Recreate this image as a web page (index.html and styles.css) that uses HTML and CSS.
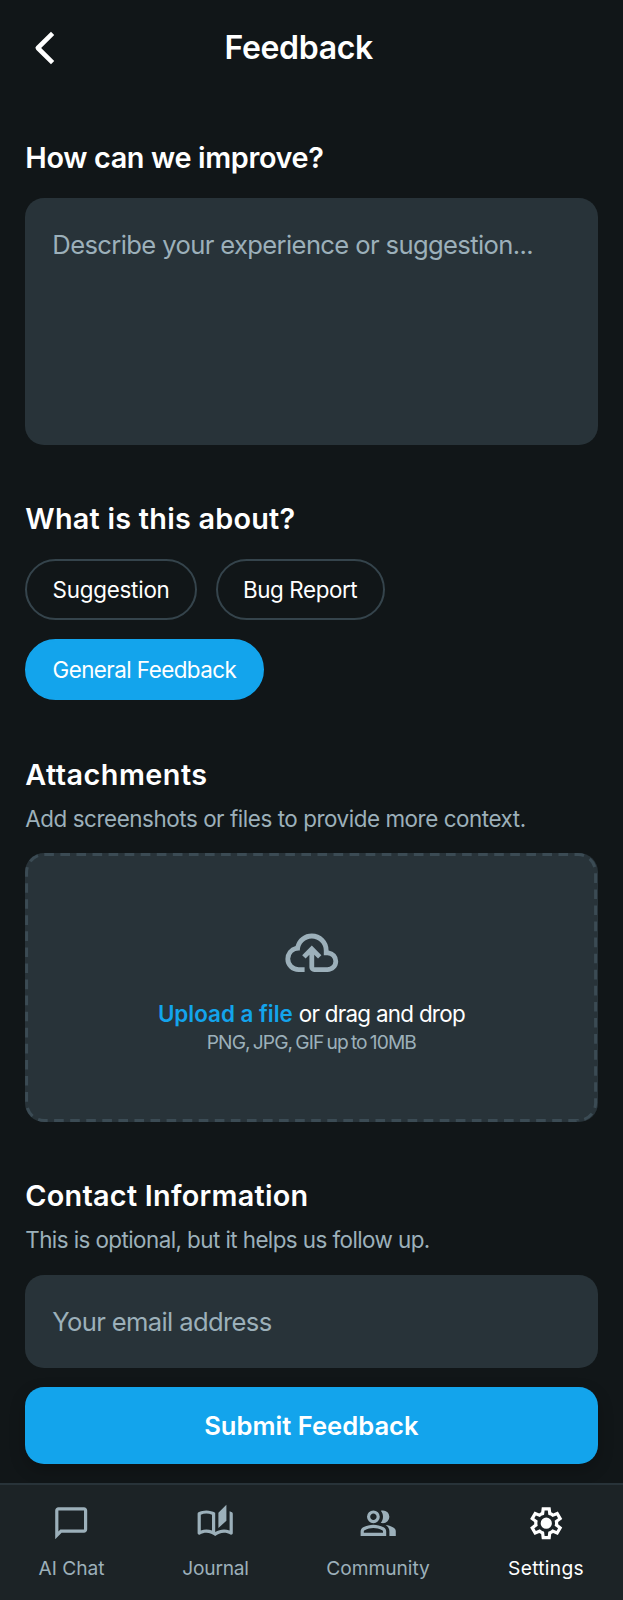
FILE: index.html
```html
<!DOCTYPE html>
<html lang="en">
<head>
<meta charset="utf-8">
<title>Feedback</title>
<link rel="stylesheet" href="styles.css">
</head>
<body>
<div class="screen">
  <header class="header">
    <svg class="back" viewBox="0 0 24 36" fill="none" stroke="currentColor" stroke-width="4.6" stroke-linejoin="round"><path d="M20.6 3.4 5.8 18 20.6 32.6"/></svg>
    <h1 class="title">Feedback</h1>
  </header>
  <main class="main">
    <section class="section">
      <h2 class="heading h-improve">How can we improve?</h2>
      <div class="field textarea"><span class="ph ph-describe">Describe your experience or suggestion...</span></div>
    </section>
    <section class="section">
      <h2 class="heading h-about">What is this about?</h2>
      <div class="chips">
        <button class="chip chip-suggestion">Suggestion</button>
        <button class="chip chip-bug">Bug Report</button>
        <button class="chip chip-general active">General Feedback</button>
      </div>
    </section>
    <section class="section">
      <h2 class="heading h-attach">Attachments</h2>
      <p class="sub sub-attach">Add screenshots or files to provide more context.</p>
      <div class="drop">
        <svg class="dashes" viewBox="0 0 572 269" fill="none"><rect x="1.5" y="1.5" width="569" height="266" rx="17.7" pathLength="1632"/></svg>
        <svg class="cloud" viewBox="0 0 24 24" fill="currentColor"><path d="M6.5 20q-2.275 0-3.887-1.575T1 14.575q0-1.95 1.175-3.475T5.25 9.15q.625-2.3 2.5-3.725T12 4q2.925 0 4.963 2.038T19 11q1.725.2 2.863 1.488T23 15.5q0 1.875-1.312 3.188T18.5 20H13q-.825 0-1.412-.587T11 18v-5.15L9.4 14.4 8 13l4-4 4 4-1.4 1.4-1.6-1.55V18h5.5q1.05 0 1.775-.725T21 15.5t-.725-1.775T18.5 13H17v-2q0-2.075-1.463-3.537T12 6 8.463 7.463 7 11h-.5q-1.45 0-2.475 1.025T3 14.5t1.025 2.475T6.5 18H9v2z"/></svg>
        <p class="drop-text"><span class="link">Upload a file</span><span class="rest">or drag and drop</span></p>
        <p class="drop-hint">PNG, JPG, GIF up to 10MB</p>
      </div>
    </section>
    <section class="section">
      <h2 class="heading h-contact">Contact Information</h2>
      <p class="sub sub-contact">This is optional, but it helps us follow up.</p>
      <div class="field email"><span class="ph ph-email">Your email address</span></div>
    </section>
  </main>
  <div class="action"><button class="submit"><span>Submit Feedback</span></button></div>
  <nav class="nav">
    <a class="item item-chat">
      <svg class="icon" viewBox="0 0 24 24" fill="currentColor" fill-rule="evenodd"><path d="M20 2H4c-1.1 0-2 .9-2 2v18l4-4h14c1.1 0 2-.9 2-2V4c0-1.1-.9-2-2-2zm0 14H5.2L4 17.2V4h16v12z"/></svg>
      <span>AI Chat</span>
    </a>
    <a class="item item-journal">
      <svg class="icon" viewBox="0 0 24 24" fill="currentColor" fill-rule="evenodd"><path d="M22.47 5.2C22 4.96 21.51 4.76 21 4.59v12.03C19.86 16.21 18.69 16 17.5 16c-1.9 0-3.78.54-5.5 1.58V5.48C10.38 4.55 8.51 4 6.5 4 4.71 4 3.02 4.44 1.53 5.2 1.2 5.36 1 5.71 1 6.08v12.08c0 .58.47.99 1 .99.16 0 .32-.04.48-.12C3.69 18.4 5.05 18 6.5 18c2.07 0 3.98.82 5.5 2 1.52-1.18 3.43-2 5.5-2 1.45 0 2.81.4 4.02 1.04.16.08.32.12.48.12.52 0 1-.41 1-.99V6.08C23 5.71 22.8 5.36 22.47 5.2zM10 16.62C8.86 16.21 7.69 16 6.5 16c-1.19 0-2.36.21-3.5.62V6.71C4.11 6.24 5.28 6 6.5 6 7.7 6 8.89 6.25 10 6.72zM19 .5l-5 5V15l5-4.5z"/></svg>
      <span>Journal</span>
    </a>
    <a class="item item-community">
      <svg class="icon" viewBox="0 0 24 24" fill="currentColor" fill-rule="evenodd"><path d="M1 20v-2.8q0-.85.438-1.562T2.6 14.55q1.55-.775 3.15-1.162T9 13t3.25.388 3.15 1.162q.725.375 1.163 1.088T17 17.2V20zm18 0v-3q0-1.1-.612-2.113T16.65 13.15q1.275.15 2.4.513t2.1.887q.9.5 1.375 1.112T23 17v3zM9 12q-1.65 0-2.825-1.175T5 8t1.175-2.825T9 4t2.825 1.175T13 8t-1.175 2.825T9 12m10-4q0 1.65-1.175 2.825T15 12q-.275 0-.7-.062t-.7-.138q.675-.8 1.038-1.775T15 8t-.362-2.025T13.6 4.2q.35-.125.7-.163T15 4q1.65 0 2.825 1.175T19 8M3 18h12v-.8q0-.275-.137-.5t-.363-.35q-1.35-.675-2.725-1.012T9 15t-2.775.338T3.5 16.35q-.225.125-.363.35T3 17.2zm6-8q.825 0 1.413-.587T11 8t-.587-1.412T9 6t-1.412.588T7 8t.588 1.413T9 10"/></svg>
      <span>Community</span>
    </a>
    <a class="item item-settings current">
      <svg class="icon" viewBox="0 0 24 24" fill="currentColor" fill-rule="evenodd"><path d="M9.25 22l-.4-3.2q-.325-.125-.612-.3t-.563-.375L4.7 19.375l-2.75-4.75 2.575-1.95Q4.5 12.5 4.5 12.337v-.675q0-.162.025-.337L1.95 9.375l2.75-4.75 2.975 1.25q.275-.2.575-.375t.6-.3l.4-3.2h5.5l.4 3.2q.325.125.613.3t.562.375l2.975-1.25 2.75 4.75-2.575 1.95q.025.175.025.338v.674q0 .163-.05.338l2.575 1.95-2.75 4.75-2.95-1.25q-.275.2-.575.375t-.6.3l-.4 3.2zm1.75-2h1.975l.35-2.65q.775-.2 1.438-.587t1.212-.938l2.475 1.025.975-1.7-2.15-1.625q.125-.35.175-.737T17.5 12t-.05-.787-.175-.738l2.15-1.625-.975-1.7-2.475 1.05q-.55-.575-1.212-.962t-1.438-.588L13 4h-1.975l-.35 2.65q-.775.2-1.437.588t-1.213.937L5.55 7.15l-.975 1.7 2.15 1.6q-.125.375-.175.75t-.05.8q0 .4.05.775t.175.75l-2.15 1.625.975 1.7 2.475-1.05q.55.575 1.213.963t1.437.587zm1.05-4.5q1.45 0 2.475-1.025T15.55 12t-1.025-2.475T12.05 8.5q-1.475 0-2.488 1.025T8.55 12t1.013 2.475T12.05 15.5"/></svg>
      <span>Settings</span>
    </a>
  </nav>
</div>
</body>
</html>
```
FILE: styles.css
```css
* { box-sizing: border-box; margin: 0; padding: 0; }
body { background: #111618; color: #fff; font-family: Inter, "Liberation Sans", sans-serif; white-space: nowrap; }
.screen { width: 623px; height: 1600px; display: flex; flex-direction: column; overflow: hidden; }
.header { height: 96px; flex: none; padding: 0 225px 0 32px; display: flex; align-items: center; justify-content: space-between; }
.back { width: 24px; height: 36px; }
.title { width: 148px; margin-right: 25.5px; margin-left: auto; font-size: 32px; line-height: 40px; font-weight: 600; letter-spacing: -0.35px; }
.main { padding: 44px 25.5px 0 25.3px; display: flex; flex-direction: column; gap: 56px; }
.section { display: flex; flex-direction: column; }
.heading { font-size: 28.8px; line-height: 36px; font-weight: 600; }
.h-improve { letter-spacing: -0.34px; }
.h-about { letter-spacing: 0.24px; }
.h-attach { letter-spacing: 0.48px; }
.h-contact { letter-spacing: 0.27px; }
.field { background: #283339; border-radius: 19px; padding: 0 27px; }
.textarea { margin-top: 22px; height: 247px; padding-top: 27px; }
.ph { display: block; color: #9cb0ba; font-size: 25.6px; line-height: 40px; }
.ph-describe { letter-spacing: -0.63px; }
.ph-email { letter-spacing: -0.65px; }
.chips { margin: 22px 0 1px; display: flex; flex-wrap: wrap; gap: 19px; }
.chip { height: 61px; border: 2px solid #35444c; border-radius: 31px; background: transparent; color: #fff; font: 400 22.4px Inter, sans-serif; padding-left: 25.2px; text-align: left; }
.chip-suggestion { width: 171.5px; letter-spacing: -0.22px; }
.chip-bug { width: 169.5px; letter-spacing: -0.4px; }
.chip-general { width: 238.5px; letter-spacing: -0.55px; }
.chip.active { background: #13a4ec; border-color: #13a4ec; }
.sub { margin-top: 10px; color: #9cb0ba; font-size: 22.4px; line-height: 32px; }
.sub-attach { letter-spacing: -0.44px; }
.sub-contact { letter-spacing: -0.57px; }
.drop { position: relative; margin-top: 18px; height: 269px; padding-top: 71px; background: #283339; border-radius: 19px; display: flex; flex-direction: column; align-items: center; color: #9cb0ba; }
.dashes { position: absolute; inset: 0; width: 100%; height: 100%; stroke: #3b4b54; stroke-width: 3; stroke-dasharray: 9.6 6.4; }
.cloud { width: 57.6px; height: 57.6px; flex: none; }
.drop-text { display: flex; gap: 6px; margin-top: 16px; color: #fff; font-size: 22.4px; line-height: 32px; }
.link { color: #13a4ec; font-weight: 600; }
.rest { letter-spacing: -0.72px; }
.drop-hint { font-size: 19.2px; line-height: 24px; letter-spacing: -0.9px; word-spacing: -1.4px; }
.email { margin-top: 19px; height: 93px; padding-top: 27px; }
.action { padding: 19px 25.5px 0 25.3px; }
.submit { display: block; width: 100%; height: 77px; border: 0; border-radius: 19px; background: #13a4ec; color: #fff; font: 600 25.6px Inter, sans-serif; box-shadow: 0 6px 16px rgba(0,0,0,.22); }
.nav { margin-top: auto; height: 117px; flex: none; border-top: 2px solid #283339; background: #1c2326; padding: 19px 39px 0 39px; display: flex; justify-content: space-between; align-items: flex-start; color: #9cb0ba; font-size: 19.2px; line-height: 26px; }
.item { display: flex; flex-direction: column; align-items: center; gap: 12.5px; }
.item-chat { width: 65px; }
.item-journal { width: 65px; letter-spacing: -0.25px; }
.item-community { width: 102px; letter-spacing: -0.05px; }
.item-settings { width: 76px; letter-spacing: 0.3px; }
.current { color: #fff; }
.icon { width: 38.4px; height: 38.4px; }
```
